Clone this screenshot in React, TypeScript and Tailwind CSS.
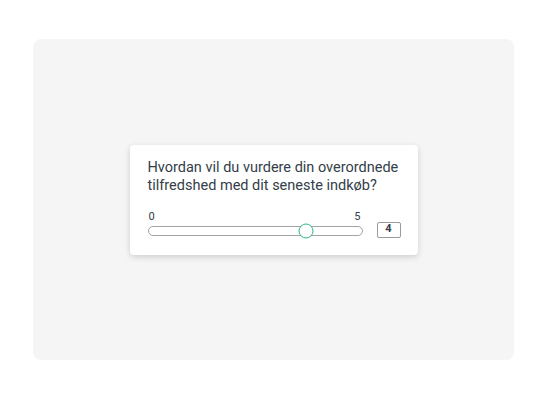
export default function App() {
  const value = 4;
  const max = 5;

  return (
    <div className="w-[547px] h-[400px] bg-white pt-[39px] pl-[33px] font-['Roboto',sans-serif]">
      <div className="w-[481px] h-[321px] rounded-lg bg-[#f5f5f5] flex items-center justify-center">
        <div className="w-[288px] h-[110px] bg-white rounded-[4px] shadow-[0_2px_6px_rgba(0,0,0,0.16)] pl-[18px] pr-[17px] pt-[14px]">
          <p className="text-[14.5px] leading-[18px] text-[#333e48] whitespace-nowrap">
            Hvordan vil du vurdere din overordnede
            <br />
            tilfredshed med dit seneste indkøb?
          </p>
          <div className="mt-[16px] flex items-end">
            <div className="w-[215px]">
              <div className="flex justify-between text-[11px] leading-[12px] text-[#333e48] pl-[1px] pr-[2px]">
                <span>0</span>
                <span>{max}</span>
              </div>
              <div className="relative mt-[3px] h-[10px] rounded-full border border-[#a3a3a3] bg-white">
                <div className="absolute left-[74%] top-1/2 w-[15px] h-[15px] -translate-x-1/2 -translate-y-1/2 rounded-full border-[1.5px] border-[#2bb885] bg-white" />
              </div>
            </div>
            <div className="ml-[14px] mb-[-2px] w-[24px] h-[16px] border border-[#9a9a9a] rounded-[2px] flex items-center justify-center text-[11px] font-bold text-[#333e48]">
              {value}
            </div>
          </div>
        </div>
      </div>
    </div>
  );
}
